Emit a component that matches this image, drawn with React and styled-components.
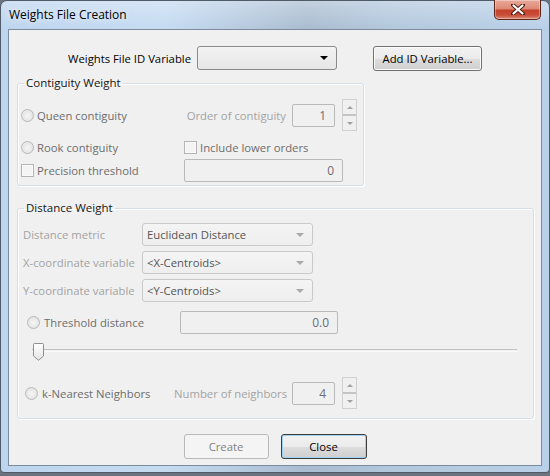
import React from 'react';
import styled, { createGlobalStyle } from 'styled-components';

const GlobalStyle = createGlobalStyle`
  html, body {
    margin: 0;
    padding: 0;
  }
  body {
    width: 550px;
    height: 476px;
    overflow: hidden;
    background: #6b747e;
    font-family: "Segoe UI", "Open Sans", "Noto Sans", sans-serif;
    font-size: 11.3px;
  }
`;

// window chrome
const Window = styled.div`
  box-sizing: border-box;
  width: 550px;
  height: 473px;
  display: flex;
  flex-direction: column;
  padding: 0 7px 6px 7px;
  border: 1px solid #4f5b68;
  border-radius: 7px 7px 4px 4px;
  background:
    linear-gradient(to bottom, rgba(255, 255, 255, 0.3), rgba(255, 255, 255, 0) 28px),
    linear-gradient(to right, #bdd5ef 0%, #c5dbf2 30%, #a9bcd0 56%, #b2c7dc 70%, #b9d0e9 100%);
`;

const TitleBar = styled.div`
  height: 28px;
  display: flex;
  justify-content: space-between;
  align-items: flex-start;
`;

const Title = styled.div`
  padding: 6px 0 0 1px;
  line-height: 16px;
  font-size: 12px;
  color: #000;
  text-shadow: 0 0 6px rgba(255, 255, 255, 0.9);
`;

const CloseBox = styled.div`
  box-sizing: border-box;
  width: 47px;
  height: 20px;
  margin: -1px 1px 0 0;
  display: flex;
  align-items: center;
  justify-content: center;
  border: 1px solid #5e2318;
  border-top: none;
  border-radius: 0 0 5px 5px;
  background: linear-gradient(to bottom, #e9a99a 0%, #dc8a75 45%, #c4412a 55%, #c9503a 80%, #dc8d78 100%);
  box-shadow: inset 0 0 0 1px rgba(255, 255, 255, 0.35);
`;

const Client = styled.div`
  flex: 1;
  display: flex;
  flex-direction: column;
  border: 1px solid #7d8c9c;
  background: #f0f0f0;
  color: #000;
`;

// top row
const TopRow = styled.div`
  display: flex;
  align-items: center;
  height: 24px;
  margin-top: 16px;
  padding-left: 59px;
`;

const TopLabel = styled.div`
  width: 123px;
  text-align: right;
  margin-right: 6px;
  color: #000;
  white-space: nowrap;
`;

const Combo = styled.div`
  box-sizing: border-box;
  width: ${p => p.$w}px;
  height: ${p => p.$h || 23}px;
  display: flex;
  align-items: center;
  justify-content: space-between;
  padding: 0 8px 0 4px;
  border: 1px solid ${p => (p.$enabled ? '#8a8a8a' : '#c9c9c9')};
  border-radius: 3px;
  background: ${p =>
    p.$enabled
      ? 'linear-gradient(to bottom, #f3f3f3, #e6e6e6)'
      : 'linear-gradient(to bottom, #f4f4f4, #eeeeee)'};
  color: #555;
  white-space: nowrap;
`;

const Arrow = styled.span`
  width: 0;
  height: 0;
  border-left: 4px solid transparent;
  border-right: 4px solid transparent;
  border-top: 4px solid ${p => (p.$enabled ? '#000' : '#a9a9a9')};
`;

const Button = styled.div`
  box-sizing: border-box;
  width: ${p => p.$w}px;
  height: ${p => p.$h || 25}px;
  margin-left: ${p => p.$ml || 0}px;
  display: flex;
  align-items: center;
  justify-content: center;
  border: 1px solid ${p => (p.$disabled ? '#b6b9bc' : p.$default ? '#3c3c3c' : '#707070')};
  border-radius: 3px;
  background: ${p =>
    p.$disabled
      ? '#f4f4f4'
      : 'linear-gradient(to bottom, #f2f2f2 0%, #ebebeb 50%, #dddddd 51%, #cfcfcf 100%)'};
  box-shadow: inset 0 0 0 1px ${p => (p.$disabled ? '#f4f4f4' : p.$default ? '#9fd3f4' : '#fcfcfc')};
  color: ${p => (p.$disabled ? '#838383' : '#000')};
  white-space: nowrap;
`;

// group boxes
const Group = styled.fieldset`
  box-sizing: border-box;
  width: ${p => p.$w}px;
  margin: ${p => p.$mt}px 0 0 8px;
  padding: 0;
  border: 1px solid #d5dfe5;
  border-radius: 3px;
  box-shadow: inset 1px 1px 0 #fff, 1px 1px 0 #fff;
  min-width: 0;
`;

const Legend = styled.legend`
  margin-left: 6px;
  padding: 0 2px;
  line-height: 16px;
  font-size: 11.5px;
  color: #151515;
`;

const GroupBody = styled.div`
  display: flex;
  flex-direction: column;
  padding: ${p => p.$pad};
`;

const Row = styled.div`
  display: flex;
  align-items: center;
  height: ${p => p.$h}px;
  margin-top: ${p => p.$mt || 0}px;
  margin-left: ${p => p.$ml || 0}px;
`;

const Cell = styled.div`
  display: flex;
  align-items: center;
  gap: ${p => (p.$gap != null ? p.$gap : 3)}px;
  width: ${p => p.$w}px;
  flex-shrink: 0;
`;

const Radio = styled.span`
  box-sizing: border-box;
  width: 13px;
  height: 13px;
  border-radius: 50%;
  border: 1px solid #b9b9b9;
  background: radial-gradient(circle at 50% 50%, #f6f6f6 0%, #e7e7e7 60%, #dcdcdc 100%);
  flex-shrink: 0;
`;

const Check = styled.span`
  box-sizing: border-box;
  width: 13px;
  height: 13px;
  border: 1px solid #b4b4b4;
  background: #f4f4f4;
  box-shadow: inset 0 0 0 1px #fafafa;
  flex-shrink: 0;
`;

const OptLabel = styled.span`
  color: #6d6d6d;
  white-space: nowrap;
`;

const DimLabel = styled.span`
  width: ${p => p.$w}px;
  margin-right: 6px;
  text-align: ${p => p.$align || 'left'};
  color: #a3a3a3;
  white-space: nowrap;
  flex-shrink: 0;
`;

const Field = styled.div`
  box-sizing: border-box;
  width: ${p => p.$w}px;
  height: 23px;
  display: flex;
  align-items: center;
  justify-content: flex-end;
  padding-right: 8px;
  border: 1px solid #b9b9b9;
  border-radius: 2px;
  background: #f0f0f0;
  color: #6c6c78;
  font-size: 12px;
  flex-shrink: 0;
`;

const Spinner = styled.div`
  box-sizing: border-box;
  width: 15px;
  height: 32px;
  margin-left: 7px;
  display: flex;
  flex-direction: column;
  border: 1px solid #d0d0d0;
  background: #f0f0f0;
`;

const SpinHalf = styled.div`
  flex: 1;
  display: flex;
  align-items: center;
  justify-content: center;
  border-top: ${p => (p.$down ? '2px solid #c4c4c4' : 'none')};
`;

const SpinTri = styled.span`
  width: 0;
  height: 0;
  border-left: 3px solid transparent;
  border-right: 3px solid transparent;
  ${p => (p.$down ? 'border-top: 3px solid #a0a0a0;' : 'border-bottom: 3px solid #a0a0a0;')}
`;

const SliderRow = styled.div`
  position: relative;
  height: 20px;
  margin: 8px 0 0 9px;
  width: 485px;
`;

const Track = styled.div`
  margin-top: 7px;
  height: 1px;
  border-top: 1px solid #c2c2c2;
  border-bottom: 1px solid #fbfbfb;
`;

const Thumb = styled.svg`
  position: absolute;
  left: 1px;
  top: 1px;
`;

const ButtonRow = styled.div`
  display: flex;
  justify-content: center;
  gap: 12px;
  margin-top: 15px;
`;

const Spin = () => (
  <Spinner>
    <SpinHalf>
      <SpinTri />
    </SpinHalf>
    <SpinHalf $down>
      <SpinTri $down />
    </SpinHalf>
  </Spinner>
);

const App = () => {
  return (
    <>
      <GlobalStyle />
      <Window>
        <TitleBar>
          <Title>Weights File Creation</Title>
          <CloseBox>
            <svg width="14" height="11" viewBox="0 0 14 11">
              <path d="M2 1 L12 10 M12 1 L2 10" stroke="#4a1d14" strokeWidth="4" strokeLinecap="round" />
              <path d="M2.5 1.5 L11.5 9.5 M11.5 1.5 L2.5 9.5" stroke="#fff" strokeWidth="2.2" strokeLinecap="round" />
            </svg>
          </CloseBox>
        </TitleBar>

        <Client>
          <TopRow>
            <TopLabel>Weights File ID Variable</TopLabel>
            <Combo $w={140} $h={24} $enabled>
              <span />
              <Arrow $enabled />
            </Combo>
            <Button $w={109} $h={25} $ml={36}>Add ID Variable...</Button>
          </TopRow>

          <Group $w={347} $mt={5}>
            <Legend>Contiguity Weight</Legend>
            <GroupBody $pad="8px 0 4px 3px">
              <Row $h={32}>
                <Cell $w={163}>
                  <Radio />
                  <OptLabel>Queen contiguity</OptLabel>
                </Cell>
                <DimLabel $w={102} $align="right">Order of contiguity</DimLabel>
                <Field $w={43}>1</Field>
                <Spin />
              </Row>
              <Row $h={24} $mt={4}>
                <Cell $w={163}>
                  <Radio />
                  <OptLabel>Rook contiguity</OptLabel>
                </Cell>
                <Cell $w={160}>
                  <Check />
                  <OptLabel>Include lower orders</OptLabel>
                </Cell>
              </Row>
              <Row $h={22}>
                <Cell $w={163}>
                  <Check />
                  <OptLabel>Precision threshold</OptLabel>
                </Cell>
                <Field $w={159}>0</Field>
              </Row>
            </GroupBody>
          </Group>

          <Group $w={517} $mt={14}>
            <Legend>Distance Weight</Legend>
            <GroupBody $pad="7px 0 9px 5px">
              <Row $h={23}>
                <DimLabel $w={113}>Distance metric</DimLabel>
                <Combo $w={171}>
                  <span>Euclidean Distance</span>
                  <Arrow />
                </Combo>
              </Row>
              <Row $h={23} $mt={5}>
                <DimLabel $w={113}>X-coordinate variable</DimLabel>
                <Combo $w={171}>
                  <span>&lt;X-Centroids&gt;</span>
                  <Arrow />
                </Combo>
              </Row>
              <Row $h={23} $mt={5}>
                <DimLabel $w={113}>Y-coordinate variable</DimLabel>
                <Combo $w={171}>
                  <span>&lt;Y-Centroids&gt;</span>
                  <Arrow />
                </Combo>
              </Row>
              <Row $h={23} $mt={9} $ml={4}>
                <Cell $w={153} $gap={4}>
                  <Radio />
                  <OptLabel>Threshold distance</OptLabel>
                </Cell>
                <Field $w={158}>0.0</Field>
              </Row>
              <SliderRow>
                <Track />
                <Thumb width="11" height="18" viewBox="0 0 11 18">
                  <defs>
                    <linearGradient id="thumbFill" x1="0" y1="0" x2="0" y2="1">
                      <stop offset="0" stopColor="#ffffff" />
                      <stop offset="1" stopColor="#e4e4e4" />
                    </linearGradient>
                  </defs>
                  <path
                    d="M1.5 0.5 H9.5 Q10.5 0.5 10.5 1.5 V13 L5.5 17.3 L0.5 13 V1.5 Q0.5 0.5 1.5 0.5 Z"
                    fill="url(#thumbFill)"
                    stroke="#8e8e8e"
                  />
                </Thumb>
              </SliderRow>
              <Row $h={32} $mt={15} $ml={2}>
                <Cell $w={149} $gap={4}>
                  <Radio />
                  <OptLabel>k-Nearest Neighbors</OptLabel>
                </Cell>
                <DimLabel $w={112} $align="right">Number of neighbors</DimLabel>
                <Field $w={43}>4</Field>
                <Spin />
              </Row>
            </GroupBody>
          </Group>

          <ButtonRow>
            <Button $w={85} $disabled>Create</Button>
            <Button $w={86} $default>Close</Button>
          </ButtonRow>
        </Client>
      </Window>
    </>
  );
};

export default App;
